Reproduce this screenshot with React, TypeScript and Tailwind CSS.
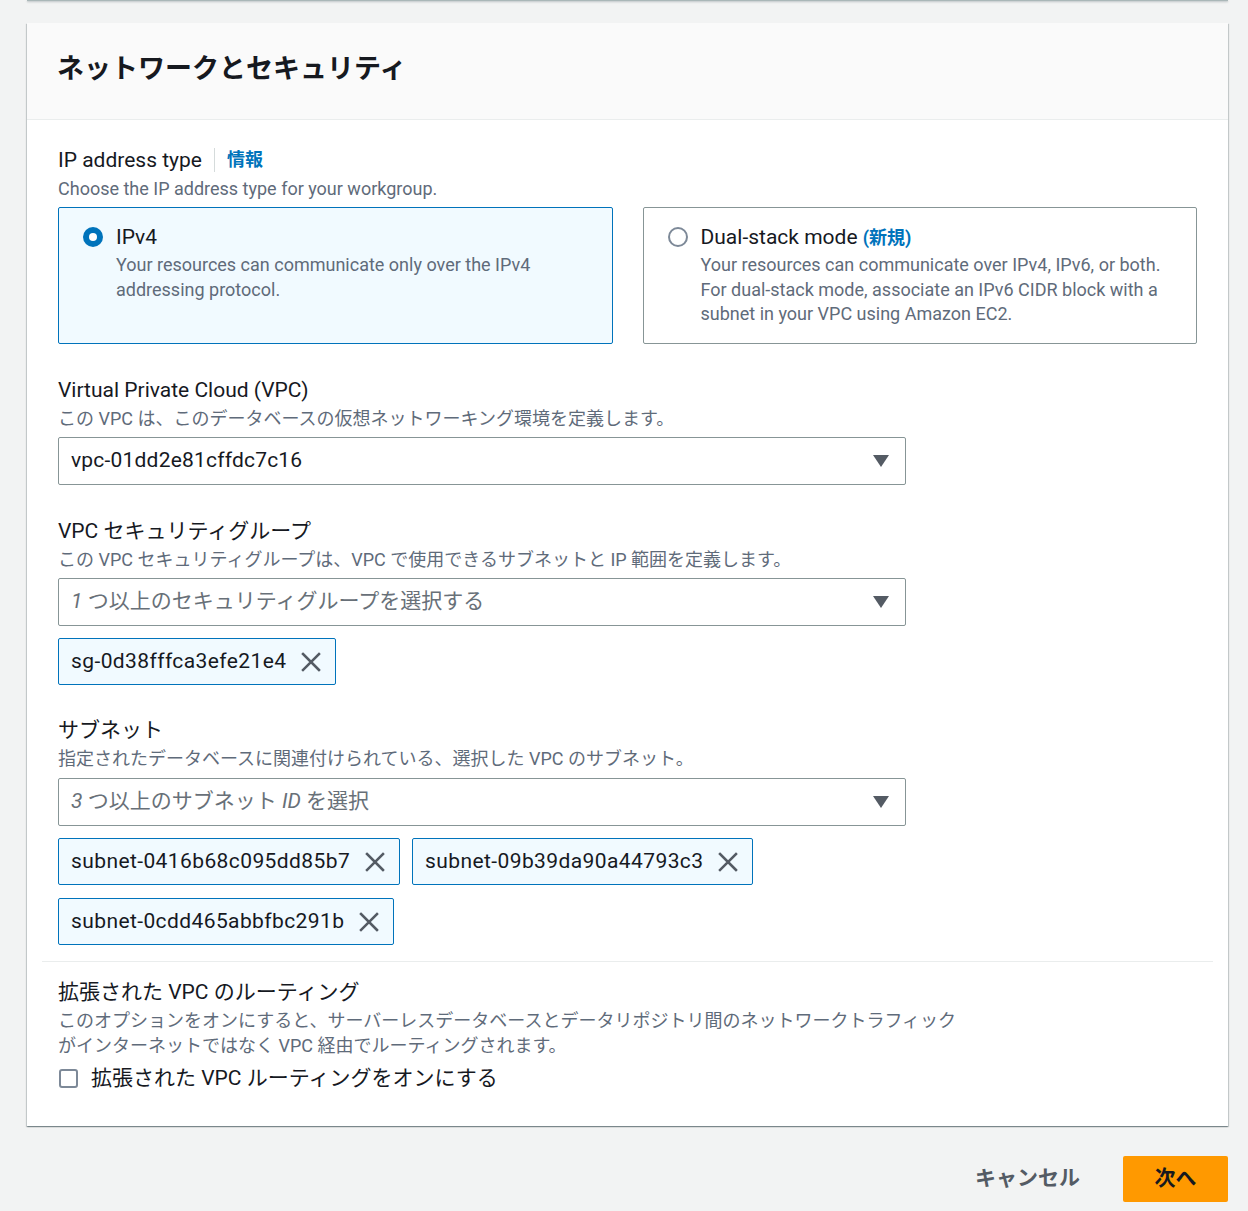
import React from "react";

const FONT = { fontFamily: 'Roboto, "Noto Sans CJK JP", sans-serif' };

function Caret() {
  return (
    <svg width="16" height="12" viewBox="0 0 16 12" className="shrink-0">
      <path d="M0 0 H16 L8 12 Z" fill="#545b64" />
    </svg>
  );
}

function XIcon() {
  return (
    <svg width="20" height="20" viewBox="0 0 20 20" className="shrink-0">
      <path d="M2 2 L18 18 M18 2 L2 18" stroke="#545b64" strokeWidth="2.5" strokeLinecap="square" />
    </svg>
  );
}

function Token({ label }: { label: string }) {
  return (
    <div className="flex h-[47px] items-center gap-[15px] rounded-[2px] border border-[#0073bb] bg-[#f1faff] pl-[12px] pr-[14px] text-[21px] tracking-[0.4px] text-[#16191f]">
      <span>{label}</span>
      <XIcon />
    </div>
  );
}

function Select({ children, placeholder }: { children: React.ReactNode; placeholder?: boolean }) {
  return (
    <div className="flex h-[48px] w-[848px] items-center justify-between rounded-[2px] border border-[#879596] bg-white pl-[12px] pr-[16px]">
      <span className={placeholder ? "text-[21px] text-[#687078]" : "text-[21px] tracking-[0.2px] text-[#16191f]"}>{children}</span>
      <Caret />
    </div>
  );
}

function FieldHead({ label, desc }: { label: string; desc: string }) {
  return (
    <>
      <div className="text-[21px] leading-[26px] text-[#16191f]">{label}</div>
      <div className="mt-[4px] text-[18px] leading-[24px] text-[#5f6b7a]">{desc}</div>
    </>
  );
}

export default function App() {
  return (
    <div className="min-h-[1211px] bg-[#f2f3f3] pl-[27px] pr-[20px]" style={FONT}>
      <div className="h-[1px] bg-[#aab7b8] shadow-[0_1px_2px_rgba(0,28,36,0.3)]" />
      <div className="mt-[22px] bg-white shadow-[0_1px_1px_0_rgba(0,28,36,0.3),1px_1px_1px_0_rgba(0,28,36,0.15),-1px_1px_1px_0_rgba(0,28,36,0.15)]">
        <div className="h-[97px] border-b border-[#eaeded] bg-[#fafafa] px-[30px] pt-[28px]">
          <h2 className="text-[27px] font-bold leading-[36px] text-[#16191f]">ネットワークとセキュリティ</h2>
        </div>

        <div className="px-[31px] pb-[16px] pt-[27px]">
          <div className="flex items-center text-[21px] leading-[26px] text-[#16191f]">
            <span>IP address type</span>
            <span className="mx-[12px] h-[24px] w-px bg-[#d5dbdb]" />
            <span className="text-[18px] font-bold text-[#0073bb]">情報</span>
          </div>
          <div className="mt-[4px] text-[18px] leading-[24px] text-[#5f6b7a]">
            Choose the IP address type for your workgroup.
          </div>

          <div className="mt-[6px] grid grid-cols-2 gap-[30px]">
            <div className="flex h-[137px] gap-[13px] rounded-[2px] border border-[#0073bb] bg-[#f1faff] px-[24px] pt-[16px]">
              <span className="mt-[3px] flex h-[20px] w-[20px] shrink-0 items-center justify-center rounded-full bg-[#0073bb]">
                <span className="h-[8px] w-[8px] rounded-full bg-white" />
              </span>
              <div>
                <div className="text-[21px] leading-[26px] text-[#16191f]">IPv4</div>
                <div className="mt-[3px] text-[18px] leading-[24.5px] text-[#5f6b7a]">
                  Your resources can communicate only over the IPv4 addressing protocol.
                </div>
              </div>
            </div>
            <div className="flex h-[137px] gap-[13px] rounded-[2px] border border-[#879596] bg-white px-[24px] pt-[16px]">
              <span className="mt-[3px] h-[20px] w-[20px] shrink-0 rounded-full border-2 border-[#7d8998] bg-white" />
              <div>
                <div className="text-[21px] leading-[26px] text-[#16191f]">
                  Dual-stack mode <span className="text-[18px] font-bold text-[#0073bb]">(新規)</span>
                </div>
                <div className="mt-[2px] text-[18px] leading-[24.5px] text-[#5f6b7a]">
                  Your resources can communicate over IPv4, IPv6, or both. For dual-stack mode, associate an IPv6 CIDR block with a subnet in your VPC using Amazon EC2.
                </div>
              </div>
            </div>
          </div>

          <div className="mt-[33px]">
            <FieldHead label="Virtual Private Cloud (VPC)" desc="この VPC は、このデータベースの仮想ネットワーキング環境を定義します。" />
            <div className="mt-[6px]">
              <Select>vpc-01dd2e81cffdc7c16</Select>
            </div>
          </div>

          <div className="mt-[33px]">
            <FieldHead label="VPC セキュリティグループ" desc="この VPC セキュリティグループは、VPC で使用できるサブネットと IP 範囲を定義します。" />
            <div className="mt-[6px]">
              <Select placeholder>
                <span className="italic">1</span> つ以上のセキュリティグループを選択する
              </Select>
            </div>
            <div className="mt-[12px] flex">
              <Token label="sg-0d38fffca3efe21e4" />
            </div>
          </div>

          <div className="mt-[32px]">
            <FieldHead label="サブネット" desc="指定されたデータベースに関連付けられている、選択した VPC のサブネット。" />
            <div className="mt-[7px]">
              <Select placeholder>
                <span className="italic">3</span> つ以上のサブネット <span className="italic">ID</span> を選択
              </Select>
            </div>
            <div className="mt-[12px] flex flex-col gap-[13px]">
              <div className="flex gap-[12px]">
                <Token label="subnet-0416b68c095dd85b7" />
                <Token label="subnet-09b39da90a44793c3" />
              </div>
              <div className="flex">
                <Token label="subnet-0cdd465abbfbc291b" />
              </div>
            </div>
          </div>
        </div>

        <div className="mx-[15px] border-t border-[#eaeded]" />

        <div className="px-[31px] pb-[35px] pt-[17px]">
          <div className="text-[21px] leading-[26px] text-[#16191f]">拡張された VPC のルーティング</div>
          <div className="mt-[3px] w-[905px] text-[18px] leading-[25px] text-[#5f6b7a]">
            このオプションをオンにすると、サーバーレスデータベースとデータリポジトリ間のネットワークトラフィックがインターネットではなく VPC 経由でルーティングされます。
          </div>
          <label className="mt-[7px] flex items-center gap-[13px] text-[21px] leading-[26px] text-[#16191f]">
            <span className="ml-px h-[19px] w-[19px] rounded-[3px] border-2 border-[#7d8998] bg-white" />
            <span>拡張された VPC ルーティングをオンにする</span>
          </label>
        </div>
      </div>

      <div className="mt-[30px] flex items-center justify-end gap-[43px]">
        <button className="text-[21px] font-bold text-[#545b64]">キャンセル</button>
        <button className="h-[46px] w-[105px] rounded-[2px] bg-[#ff9900] text-[21px] font-bold text-[#16191f]">次へ</button>
      </div>
    </div>
  );
}
